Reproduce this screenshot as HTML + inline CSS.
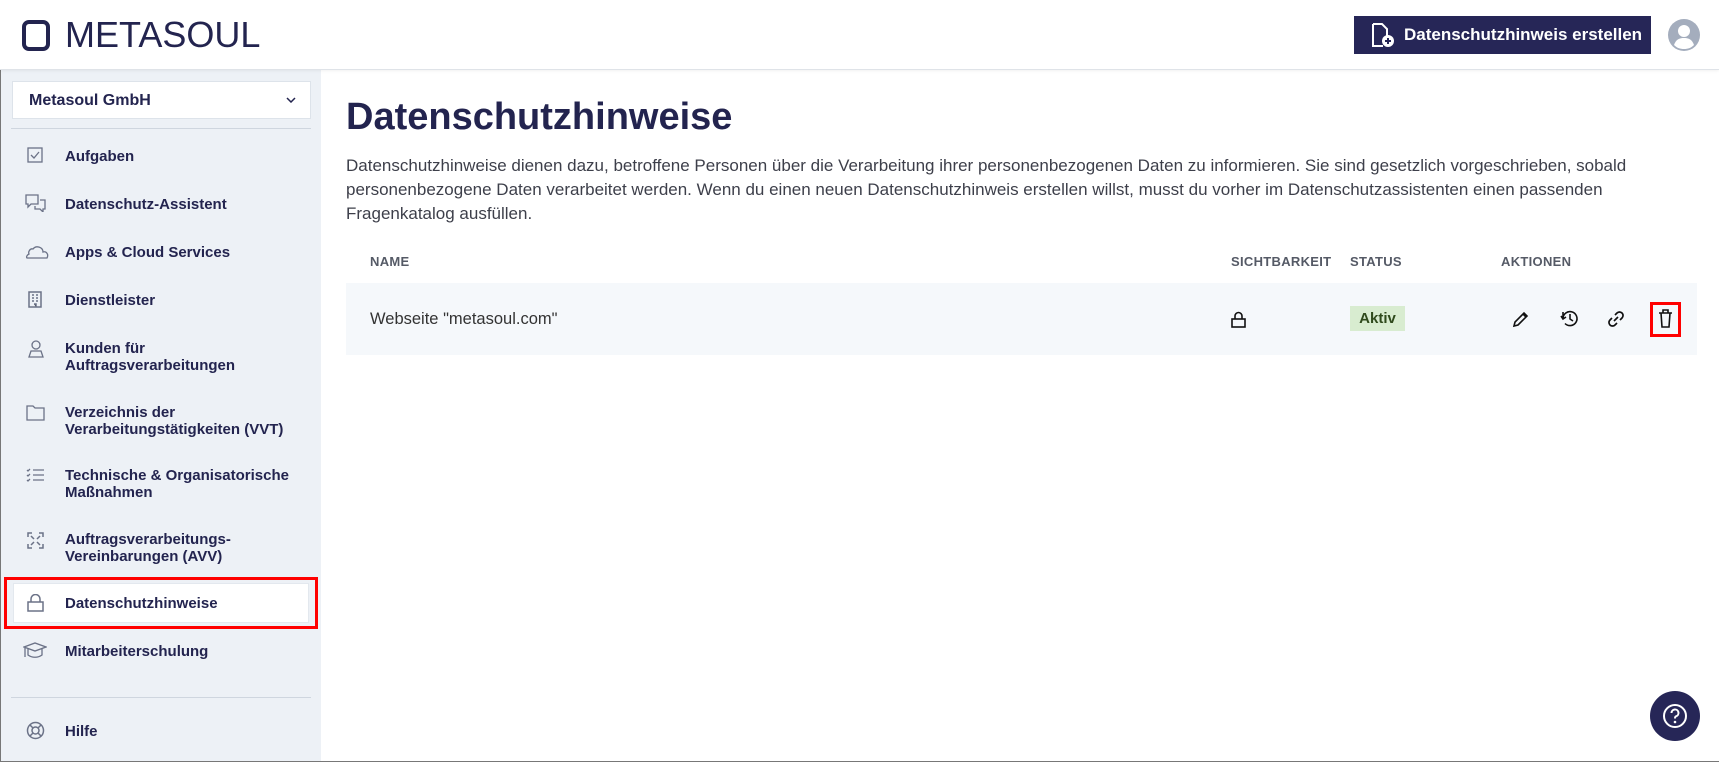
<!DOCTYPE html>
<html><head><meta charset="utf-8"><style>
*{box-sizing:border-box;margin:0;padding:0}
body{width:1719px;height:762px;overflow:hidden;background:#fff;font-family:"Liberation Sans",sans-serif;color:#23244f;position:relative}
.hdr{position:absolute;left:0;top:0;width:1719px;height:70px;background:#fff;border-bottom:1px solid #dfe3e8;box-shadow:0 1px 3px rgba(0,0,0,.06);z-index:2}
.logo{position:absolute;left:22px;top:16px;display:flex;align-items:center}
.logo .sq{width:28px;height:31px;border:4px solid #23244f;border-radius:7px;margin-right:15px}
.logo span{font-size:36px;letter-spacing:0;color:#23244f;line-height:38px}
.btn{position:absolute;left:1354px;top:16px;width:297px;height:38px;background:#262657;color:#fff;font-weight:bold;font-size:17px;display:flex;align-items:center;padding-left:16px}
.btn svg{margin-right:8px}
.av{position:absolute;left:1668px;top:19px}
.side{position:absolute;left:0;top:70px;width:321px;height:692px;background:#edf1f6}
.dd{position:absolute;left:12px;top:11px;width:299px;height:38px;background:#fff;border:1px solid #dde3ea;font-weight:bold;font-size:16px;padding:10px 16px}
.dd svg{position:absolute;right:14px;top:15px}
.sep{position:absolute;left:11px;width:300px;height:1px;background:#cfd6df}
.it{position:absolute;left:65px;font-weight:bold;font-size:15px;line-height:17px}
.ic{position:absolute;left:25px}
.sel{position:absolute;left:4px;top:507px;width:314px;height:52px;border:3px solid #f00}
.sel div{position:absolute;left:6px;top:3px;right:6px;bottom:3px;background:#fff;border:1px solid #e3e8ee}
h1{position:absolute;left:346px;top:96px;font-size:38px;font-weight:bold;color:#23244f}
p{position:absolute;left:346px;top:154px;width:1350px;font-size:17px;line-height:24px;color:#3d3f4a;white-space:nowrap}
.th{position:absolute;top:254px;font-size:13px;font-weight:bold;color:#555a66;letter-spacing:.3px}
.row{position:absolute;left:346px;top:283px;width:1351px;height:72px;background:#f5f8fb}
.badge{position:absolute;left:1350px;top:306px;width:55px;height:25px;background:#d8ecd0;color:#2f4a1c;font-weight:bold;font-size:15px;text-align:center;line-height:25px}
.help{position:absolute;left:1650px;top:691px;width:50px;height:50px;border-radius:50%;background:#262657}
</style></head><body>
<div class="hdr">
 <div class="logo"><div class="sq"></div><span>METASOUL</span></div>
 <div class="btn"><svg width="26" height="24" viewBox="0 0 26 24"><path d="M3 1h9l5 5v7M3 1v22h10" fill="none" stroke="#fff" stroke-width="2"/><circle cx="18" cy="18" r="6" fill="#fff"/><path d="M18 15v6M15 18h6" stroke="#262657" stroke-width="2"/></svg>Datenschutzhinweis erstellen</div>
 <svg class="av" width="32" height="32" viewBox="0 0 32 32"><circle cx="16" cy="16" r="16" fill="#a4adbd"/><circle cx="16" cy="12" r="6" fill="#fff"/><path d="M6 26c2-6 6-7 10-7s8 1 10 7c-3 3-6 4-10 4s-7-1-10-4z" fill="#fff"/></svg>
</div>
<div class="side">
 <div class="dd">Metasoul GmbH<svg width="10" height="6"><path d="M1 1l4 4 4-4" fill="none" stroke="#23244f" stroke-width="1.5"/></svg></div>
 <div class="sep" style="top:58px"></div>
 <div class="sel"><div></div></div>
 <svg class="ic" style="top:77px;left:27px" width="16" height="16"><rect x="1" y="1" width="14" height="14" fill="none" stroke="#6b7287" stroke-width="1.3"/><path d="M4 8l3 3 5-6" fill="none" stroke="#6b7287" stroke-width="1.3"/></svg>
 <div class="it" style="top:78px">Aufgaben</div>
 <svg class="ic" style="top:124px" width="22" height="18"><path d="M1 1h12v9H6l-3 3v-3H1z M15 6h5v9h-2v3l-3-3h-5v-3" fill="none" stroke="#6b7287" stroke-width="1.3"/></svg>
 <div class="it" style="top:126px">Datenschutz-Assistent</div>
 <svg class="ic" style="top:174px" width="24" height="16"><path d="M2 14h20c2-4-1-7-4-6 0-5-7-7-10-3C5 4 3 8 4 10c-2 1-3 3-2 4z" fill="none" stroke="#6b7287" stroke-width="1.3"/></svg>
 <div class="it" style="top:174px">Apps &amp; Cloud Services</div>
 <svg class="ic" style="top:221px;left:28px" width="14" height="17"><rect x="1" y="1" width="12" height="15" fill="none" stroke="#6b7287" stroke-width="1.5"/><path d="M4 4h2M8 4h2M4 7h2M8 7h2M4 10h2M8 10h2M6 13h2v3" stroke="#6b7287" stroke-width="1.5"/></svg>
 <div class="it" style="top:222px">Dienstleister</div>
 <svg class="ic" style="top:270px;left:27px" width="18" height="18"><circle cx="9" cy="5" r="4" fill="none" stroke="#6b7287" stroke-width="1.3"/><path d="M2 17l2-6h10l2 6z" fill="none" stroke="#6b7287" stroke-width="1.3"/></svg>
 <div class="it" style="top:270px">Kunden für<br>Auftragsverarbeitungen</div>
 <svg class="ic" style="top:335px;left:26px" width="19" height="16"><path d="M1 1h6l2 2h9v12H1z" fill="none" stroke="#6b7287" stroke-width="1.3"/></svg>
 <div class="it" style="top:334px">Verzeichnis der<br>Verarbeitungstätigkeiten (VVT)</div>
 <svg class="ic" style="top:398px;left:26px" width="19" height="14"><path d="M1 2l1 1 2-2M1 7l1 1 2-2M1 12l1 1 2-2M7 2h11M7 7h11M7 12h11" fill="none" stroke="#6b7287" stroke-width="1.3"/></svg>
 <div class="it" style="top:397px">Technische &amp; Organisatorische<br>Maßnahmen</div>
 <svg class="ic" style="top:462px;left:27px" width="17" height="17"><path d="M1 5V1h4M12 1h4v4M16 12v4h-4M5 16H1v-4M4 4l3 3M13 4l-3 3M4 13l3-3M13 13l-3-3" fill="none" stroke="#6b7287" stroke-width="1.5"/></svg>
 <div class="it" style="top:461px">Auftragsverarbeitungs-<br>Vereinbarungen (AVV)</div>
 <svg class="ic" style="top:524px;left:27px" width="17" height="18"><path d="M4 8V5a4.5 4.5 0 0 1 9 0v3" fill="none" stroke="#6b7287" stroke-width="1.5"/><rect x="1" y="8" width="15" height="9" fill="none" stroke="#6b7287" stroke-width="1.5"/></svg>
 <div class="it" style="top:525px">Datenschutzhinweise</div>
 <svg class="ic" style="top:572px;left:23px" width="24" height="18"><path d="M1 5l11-4 11 4-11 4z M5 7v6c4 3 10 3 14 0V7M2 6v9" fill="none" stroke="#6b7287" stroke-width="1.3"/></svg>
 <div class="it" style="top:573px">Mitarbeiterschulung</div>
 <div class="sep" style="top:627px"></div>
 <svg class="ic" style="top:651px;left:26px" width="19" height="19"><circle cx="9.5" cy="9.5" r="8" fill="none" stroke="#6b7287" stroke-width="1.5"/><circle cx="9.5" cy="9.5" r="3.5" fill="none" stroke="#6b7287" stroke-width="1.5"/><path d="M4 4l3 3M15 4l-3 3M4 15l3-3M15 15l-3-3" stroke="#6b7287" stroke-width="1.5"/></svg>
 <div class="it" style="top:653px">Hilfe</div>
</div>
<h1>Datenschutzhinweise</h1>
<p>Datenschutzhinweise dienen dazu, betroffene Personen über die Verarbeitung ihrer personenbezogenen Daten zu informieren. Sie sind gesetzlich vorgeschrieben, sobald<br>personenbezogene Daten verarbeitet werden. Wenn du einen neuen Datenschutzhinweis erstellen willst, musst du vorher im Datenschutzassistenten einen passenden<br>Fragenkatalog ausfüllen.</p>
<div class="th" style="left:370px">NAME</div>
<div class="th" style="left:1231px">SICHTBARKEIT</div>
<div class="th" style="left:1350px">STATUS</div>
<div class="th" style="left:1501px">AKTIONEN</div>
<div class="row"></div>
<div style="position:absolute;left:370px;top:310px;font-size:16.5px;color:#333">Webseite "metasoul.com"</div>
<svg style="position:absolute;left:1231px;top:311px" width="15" height="17"><path d="M4 8V5a3.5 3.5 0 0 1 7 0v3" fill="none" stroke="#111" stroke-width="1.6"/><rect x="1" y="8" width="13" height="8" fill="none" stroke="#111" stroke-width="1.6"/></svg>
<div class="badge">Aktiv</div>
<svg style="position:absolute;left:1512px;top:310px" width="18" height="18"><path d="M2 16l1-4 9-9 3 3-9 9zM11 4l3 3" fill="none" stroke="#111" stroke-width="1.6"/></svg>
<svg style="position:absolute;left:1560px;top:309px" width="19" height="19"><path d="M3 9.5a7 7 0 1 1 2 5M3 3v6h0M1 7l2 3 3-2M10 5v5l3 2" fill="none" stroke="#111" stroke-width="1.6"/></svg>
<svg style="position:absolute;left:1606px;top:309px" width="20" height="20"><path d="M8 12l4-4M9 6l2-2a3 3 0 0 1 5 5l-2 2M11 14l-2 2a3 3 0 0 1-5-5l2-2" fill="none" stroke="#111" stroke-width="1.7"/></svg>
<div style="position:absolute;left:1650px;top:302px;width:31px;height:35px;border:3px solid #f00"></div>
<svg style="position:absolute;left:1658px;top:309px" width="15" height="20"><path d="M1 4h13M5 4V1h5v3M3 4l1 14h7l1-14" fill="none" stroke="#111" stroke-width="1.6"/></svg>
<div class="help"><svg width="50" height="50"><circle cx="25" cy="25" r="11" fill="none" stroke="#fff" stroke-width="2"/><path d="M21.5 22a3.5 3.5 0 1 1 4.5 3.3c-1 .4-1 1-1 2.2" fill="none" stroke="#fff" stroke-width="2"/><circle cx="25" cy="31" r="1.3" fill="#fff"/></svg></div>
<div style="position:absolute;left:0;top:0;width:1px;height:762px;background:#777"></div>
<div style="position:absolute;left:0;top:761px;width:1719px;height:1px;background:#777"></div>
</body></html>
